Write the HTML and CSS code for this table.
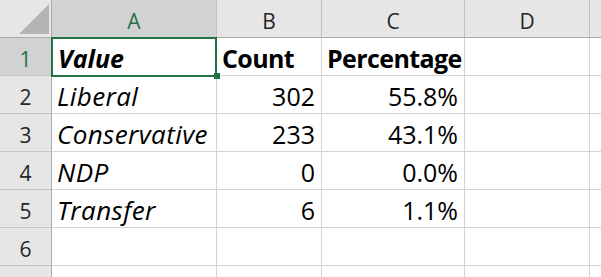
FILE: index.html
```html
<!DOCTYPE html>
<html>
<head>
<meta charset="utf-8">
<link rel="stylesheet" href="styles.css">
</head>
<body>
<div class="sheet">
  <div class="corner">
    <svg class="tri" width="52" height="38" viewBox="0 0 52 38"><polygon points="19,34 49,34 49,4" fill="#b5b5b5"/></svg>
  </div>
  <div class="colh sel">A</div>
  <div class="colh">B</div>
  <div class="colh">C</div>
  <div class="colh">D</div>
  <div class="colh"></div>

  <div class="rowh sel">1</div>
  <div class="cell bi active">Value<span class="selbox"></span><span class="handle"></span></div>
  <div class="cell b">Count</div>
  <div class="cell b">Percentage</div>
  <div class="cell"></div>
  <div class="cell"></div>

  <div class="rowh">2</div>
  <div class="cell i">Liberal</div>
  <div class="cell num">302</div>
  <div class="cell num">55.8%</div>
  <div class="cell"></div>
  <div class="cell"></div>

  <div class="rowh">3</div>
  <div class="cell i">Conservative</div>
  <div class="cell num">233</div>
  <div class="cell num">43.1%</div>
  <div class="cell"></div>
  <div class="cell"></div>

  <div class="rowh">4</div>
  <div class="cell i">NDP</div>
  <div class="cell num">0</div>
  <div class="cell num">0.0%</div>
  <div class="cell"></div>
  <div class="cell"></div>

  <div class="rowh">5</div>
  <div class="cell i">Transfer</div>
  <div class="cell num">6</div>
  <div class="cell num">1.1%</div>
  <div class="cell"></div>
  <div class="cell"></div>

  <div class="rowh">6</div>
  <div class="cell"></div>
  <div class="cell"></div>
  <div class="cell"></div>
  <div class="cell"></div>
  <div class="cell"></div>

  <div class="rowh"></div>
  <div class="cell"></div>
  <div class="cell"></div>
  <div class="cell"></div>
  <div class="cell"></div>
  <div class="cell"></div>
</div>
</body>
</html>
```

FILE: styles.css
```css
html, body {
  margin: 0;
  padding: 0;
  background: #ffffff;
  overflow: hidden;
}
.sheet {
  width: 601px;
  height: 277px;
  overflow: hidden;
  display: grid;
  grid-template-columns: 52px 165px 105px 143px 125px 1fr;
  grid-template-rows: 38px repeat(7, 38px);
  font-family: "Open Sans", "Liberation Sans", sans-serif;
}
.sheet > div {
  box-sizing: border-box;
  display: flex;
  align-items: flex-end;
  min-width: 0;
  overflow: visible;
}
.corner {
  background: #e6e6e6;
  border-right: 1px solid #ababab;
  border-bottom: 1px solid #ababab;
  position: relative;
}
.tri {
  position: absolute;
  left: 0;
  top: 0;
}
.colh {
  background: #e6e6e6;
  border-right: 1px solid #bfbfbf;
  border-bottom: 1px solid #ababab;
  justify-content: center;
  font-size: 21px;
  line-height: 28px;
  color: #262626;
  padding-bottom: 2px;
}
.rowh {
  background: #e6e6e6;
  border-right: 1px solid #ababab;
  border-bottom: 1px solid #c6c6c6;
  justify-content: center;
  font-size: 21px;
  line-height: 28px;
  color: #262626;
  padding-bottom: 2px;
}
.sel {
  background: #d2d2d2;
  color: #217346;
}
.cell {
  border-right: 1px solid #d4d4d4;
  border-bottom: 1px solid #d4d4d4;
  font-size: 25px;
  line-height: 34px;
  color: #000000;
  padding: 0 6px 0 6px;
  white-space: nowrap;
}
.b { font-weight: 700; letter-spacing: -0.6px; padding-left: 5px; }
.i { font-style: italic; font-size: 26px; letter-spacing: 0.4px; padding-left: 5px; }
.bi { font-weight: 700; font-style: italic; }
.num { justify-content: flex-end; }
.active { position: relative; }
.selbox {
  position: absolute;
  left: -1px;
  top: -1px;
  width: 166px;
  height: 40px;
  box-sizing: border-box;
  border: 2px solid #217346;
  z-index: 2;
}
.handle {
  position: absolute;
  left: 162px;
  top: 35px;
  width: 6px;
  height: 6px;
  background: #217346;
  z-index: 3;
}
```
